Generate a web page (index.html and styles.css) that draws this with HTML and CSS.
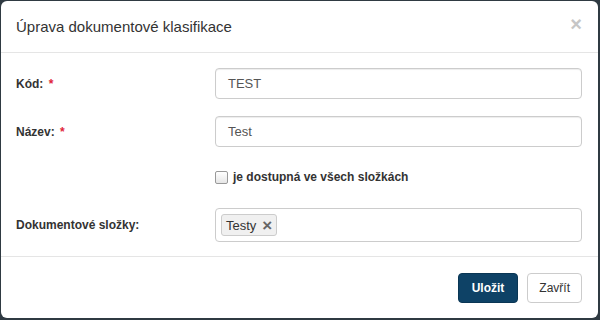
FILE: index.html
```html
<!DOCTYPE html>
<html lang="cs">
<head>
  <meta charset="UTF-8">
  <title>Úprava dokumentové klasifikace</title>
  <link rel="stylesheet" href="styles.css">
</head>
<body>
  <div class="modal">
    <div class="modal-header">
      <h4 class="modal-title">Úprava dokumentové klasifikace</h4>
      <span class="close">&times;</span>
    </div>
    <div class="modal-body">
      <div class="form-row">
        <label class="control-label">Kód: <span class="req">*</span></label>
        <div class="form-control">TEST</div>
      </div>
      <div class="form-row">
        <label class="control-label">Název: <span class="req">*</span></label>
        <div class="form-control">Test</div>
      </div>
      <div class="form-row check-row">
        <span></span>
        <label class="checkbox"><span class="box"></span>je dostupná ve všech složkách</label>
      </div>
      <div class="form-row">
        <label class="control-label">Dokumentové složky:</label>
        <div class="select-box">
          <span class="tag">Testy <span class="tag-remove">&times;</span></span>
        </div>
      </div>
    </div>
    <div class="modal-footer">
      <button class="btn btn-primary">Uložit</button>
      <button class="btn btn-default">Zavřít</button>
    </div>
  </div>
</body>
</html>
```

FILE: styles.css
```css
html, body {
  margin: 0;
  height: 100%;
}
body {
  background: #2f3a42;
  font-family: 'Liberation Sans', Arial, sans-serif;
  font-size: 12px;
  color: #333;
  padding: 1px 2px 2px 1px;
  box-sizing: border-box;
}
.modal {
  background: #fff;
  border-radius: 6px;
  height: 100%;
  display: flex;
  flex-direction: column;
}
.modal-header {
  flex-shrink: 0;
  display: flex;
  justify-content: space-between;
  align-items: center;
  height: 51px;
  padding: 0 16px 0 15px;
  border-bottom: 1px solid #e5e5e5;
}
.modal-title {
  margin: 0;
  font-size: 15px;
  font-weight: normal;
  color: #333;
}
.close {
  font-size: 20px;
  font-weight: bold;
  color: #c6c6c6;
  line-height: 1;
  margin-top: -6px;
}
.modal-body {
  flex: 1;
  padding: 15px 16px 0 15px;
}
.form-row {
  display: grid;
  grid-template-columns: 184px 1fr;
  column-gap: 15px;
  align-items: center;
  margin-bottom: 17px;
}
.form-row:last-child {
  margin-bottom: 0;
}
.control-label {
  font-weight: bold;
}
.req {
  color: #e0243a;
  margin-left: 2px;
}
.form-control {
  height: 31px;
  box-sizing: border-box;
  border: 1px solid #ccc;
  border-radius: 4px;
  padding: 0 12px;
  display: flex;
  align-items: center;
  font-size: 13px;
  color: #555;
  box-shadow: inset 0 1px 1px rgba(0,0,0,.075);
}
.check-row {
  padding-top: 6px;
  margin-bottom: 24px;
}
.checkbox {
  display: flex;
  align-items: center;
  font-weight: bold;
}
.box {
  width: 11px;
  height: 11px;
  border: 1px solid #999;
  border-radius: 2px;
  margin-right: 5px;
  background: linear-gradient(#fff, #e6e6e6);
}
.select-box {
  height: 34px;
  box-sizing: border-box;
  border: 1px solid #ccc;
  border-radius: 4px;
  padding: 0 5px;
  display: flex;
  align-items: center;
}
.tag {
  display: inline-flex;
  align-items: center;
  height: 22px;
  box-sizing: border-box;
  padding: 0 4px;
  background: #f0f0f0;
  border: 1px solid #ccc;
  border-radius: 3px;
  font-size: 13px;
  color: #333;
}
.tag-remove {
  margin-left: 6px;
  font-weight: bold;
  font-size: 17px;
  line-height: 1;
  color: #666;
}
.modal-footer {
  flex-shrink: 0;
  border-top: 1px solid #e5e5e5;
  padding: 16px 16px 0 16px;
  height: 45px;
  display: flex;
  justify-content: flex-end;
  align-items: flex-start;
  gap: 9px;
}
.btn {
  height: 30px;
  font-family: inherit;
  font-size: 12px;
  border-radius: 4px;
  padding: 0 11px;
  cursor: pointer;
}
.btn-primary {
  background: #0e4266;
  border: 1px solid #0a3654;
  color: #fff;
  font-weight: bold;
  padding: 0 13px;
}
.btn-default {
  background: #fff;
  border: 1px solid #ccc;
  color: #333;
}
```
